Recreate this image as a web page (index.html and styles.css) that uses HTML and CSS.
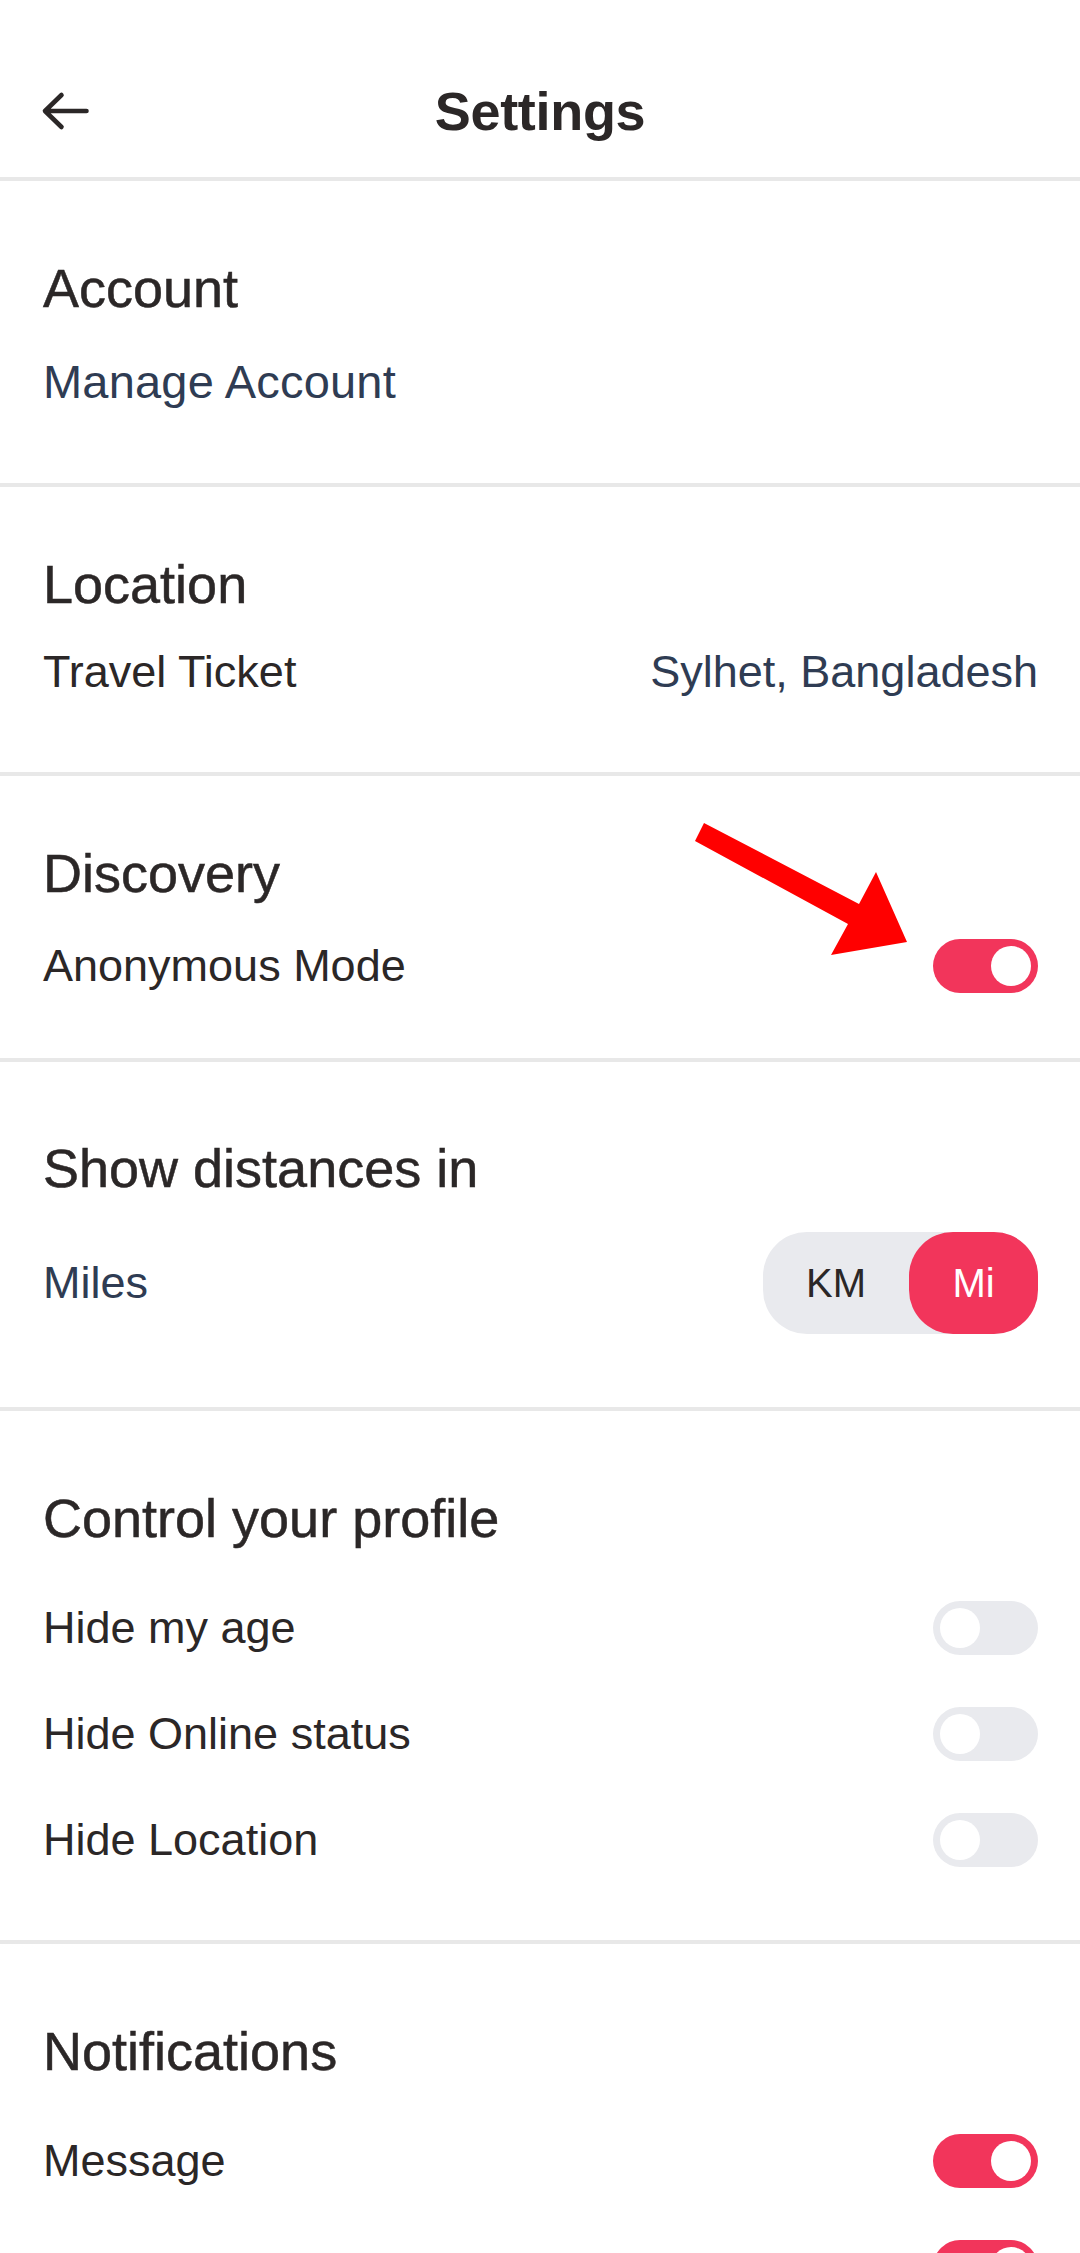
FILE: index.html
```html
<!DOCTYPE html>
<html lang="en">
<head>
<meta charset="utf-8">
<title>Settings</title>
<link rel="stylesheet" href="styles.css">
</head>
<body>
<div class="screen">
  <header class="topbar">
    <div class="topbar-left">
      <svg class="back-icon" viewBox="0 0 52 42" width="52" height="42" aria-hidden="true">
        <path d="M46.5 21 H5 M21.5 5 L5 21 L21.5 37" fill="none" stroke="#2b2727" stroke-width="4.6" stroke-linecap="round" stroke-linejoin="round"/>
      </svg>
    </div>
    <h1 class="topbar-title">Settings</h1>
    <div class="topbar-right"></div>
  </header>

  <section class="section s-account">
    <h2 class="section-title">Account</h2>
    <div class="row"><span class="value value-link">Manage Account</span></div>
  </section>

  <section class="section s-location">
    <h2 class="section-title">Location</h2>
    <div class="row"><span class="label">Travel Ticket</span><span class="value">Sylhet, Bangladesh</span></div>
  </section>

  <section class="section s-discovery">
    <h2 class="section-title">Discovery</h2>
    <div class="row"><span class="label">Anonymous Mode</span><span class="toggle on"><span class="knob"></span></span></div>
    <svg class="callout-arrow" viewBox="0 0 225 145" width="225" height="145" aria-hidden="true">
      <polygon points="14,5 169,86 186,54 217,124 141,137 158,106 5,23" fill="#ff0000"/>
    </svg>
  </section>

  <section class="section s-distance">
    <h2 class="section-title">Show distances in</h2>
    <div class="row row-tall">
      <span class="value">Miles</span>
      <div class="segmented">
        <span class="seg">KM</span>
        <span class="seg active">Mi</span>
      </div>
    </div>
  </section>

  <section class="section s-list">
    <h2 class="section-title">Control your profile</h2>
    <div class="rows">
      <div class="row"><span class="label">Hide my age</span><span class="toggle"><span class="knob"></span></span></div>
      <div class="row"><span class="label">Hide Online status</span><span class="toggle"><span class="knob"></span></span></div>
      <div class="row"><span class="label">Hide Location</span><span class="toggle"><span class="knob"></span></span></div>
    </div>
  </section>

  <section class="section s-list s-last">
    <h2 class="section-title">Notifications</h2>
    <div class="rows">
      <div class="row"><span class="label">Message</span><span class="toggle on"><span class="knob"></span></span></div>
      <div class="row"><span class="label"></span><span class="toggle on"><span class="knob"></span></span></div>
    </div>
  </section>
</div>
</body>
</html>
```

FILE: styles.css
```css
* { box-sizing: border-box; }

html, body {
  margin: 0;
  padding: 0;
  background: #ffffff;
}

body {
  font-family: "Liberation Sans", Arial, sans-serif;
  color: #2b2727;
}

.screen {
  width: 1080px;
  height: 2253px;
  overflow: hidden;
}

/* Top bar */
.topbar {
  display: grid;
  grid-template-columns: 1fr auto 1fr;
  align-items: center;
  height: 181px;
  padding: 45px 0 0 0;
  border-bottom: 4px solid #e8e8e8;
}
.topbar > * { align-self: start; height: 132px; display: flex; align-items: center; }
.topbar-left { padding-left: 40px; }
.back-icon { display: block; }
.topbar-title {
  margin: 0;
  font-size: 54px;
  line-height: 64px;
  font-weight: 700;
  color: #2b2727;
  letter-spacing: -0.3px;
}

/* Sections */
.section {
  position: relative;
  padding: 75px 42px 73px 43px;
  border-bottom: 4px solid #e8e8e8;
}
.section-title {
  margin: 0;
  font-size: 54px;
  line-height: 64px;
  font-weight: 400;
  color: #2b2727;
  letter-spacing: 0;
  -webkit-text-stroke: 0.5px #2b2727;
}

.row {
  display: flex;
  align-items: center;
  justify-content: space-between;
  height: 56px;
  font-size: 45px;
  line-height: 56px;
}
.label { color: #2b2727; }
.value { color: #2f3c53; }
.value-link { font-size: 47px; letter-spacing: 0.2px; }

.s-account .section-title { margin-bottom: 34px; }

.s-location { padding-top: 65px; padding-bottom: 72px; }
.s-location .section-title { margin-bottom: 28px; }

.s-discovery { padding-top: 65px; padding-bottom: 64px; }
.s-discovery .section-title { margin-bottom: 33px; }

.s-distance { padding-top: 74px; padding-bottom: 73px; }
.s-distance .section-title { margin-bottom: 32px; }
.row-tall { height: 102px; }

.s-list { padding-top: 75px; padding-bottom: 72px; }
.s-list .section-title { margin-bottom: 50px; }
.rows { display: flex; flex-direction: column; gap: 50px; }
.s-last { border-bottom: none; }

/* Toggle */
.toggle {
  position: relative;
  display: block;
  flex: none;
  width: 105px;
  height: 54px;
  border-radius: 27px;
  background: #e9eaee;
}
.toggle .knob {
  position: absolute;
  top: 7px;
  left: 7px;
  width: 40px;
  height: 40px;
  border-radius: 50%;
  background: #ffffff;
}
.toggle.on { background: #f2355b; }
.toggle.on .knob { left: auto; right: 7px; }

/* Segmented control */
.segmented {
  display: flex;
  width: 275px;
  height: 102px;
  border-radius: 44px;
  background: #e9eaee;
  flex: none;
}
.seg {
  flex: 1;
  display: flex;
  align-items: center;
  justify-content: center;
  font-size: 40px;
  color: #2b2727;
  border-radius: 44px;
}
.seg.active {
  flex: none;
  width: 129px;
  background: #f2355b;
  color: #ffffff;
}

/* Annotation arrow overlay */
.callout-arrow {
  position: absolute;
  left: 690px;
  top: 42px;
}
```
